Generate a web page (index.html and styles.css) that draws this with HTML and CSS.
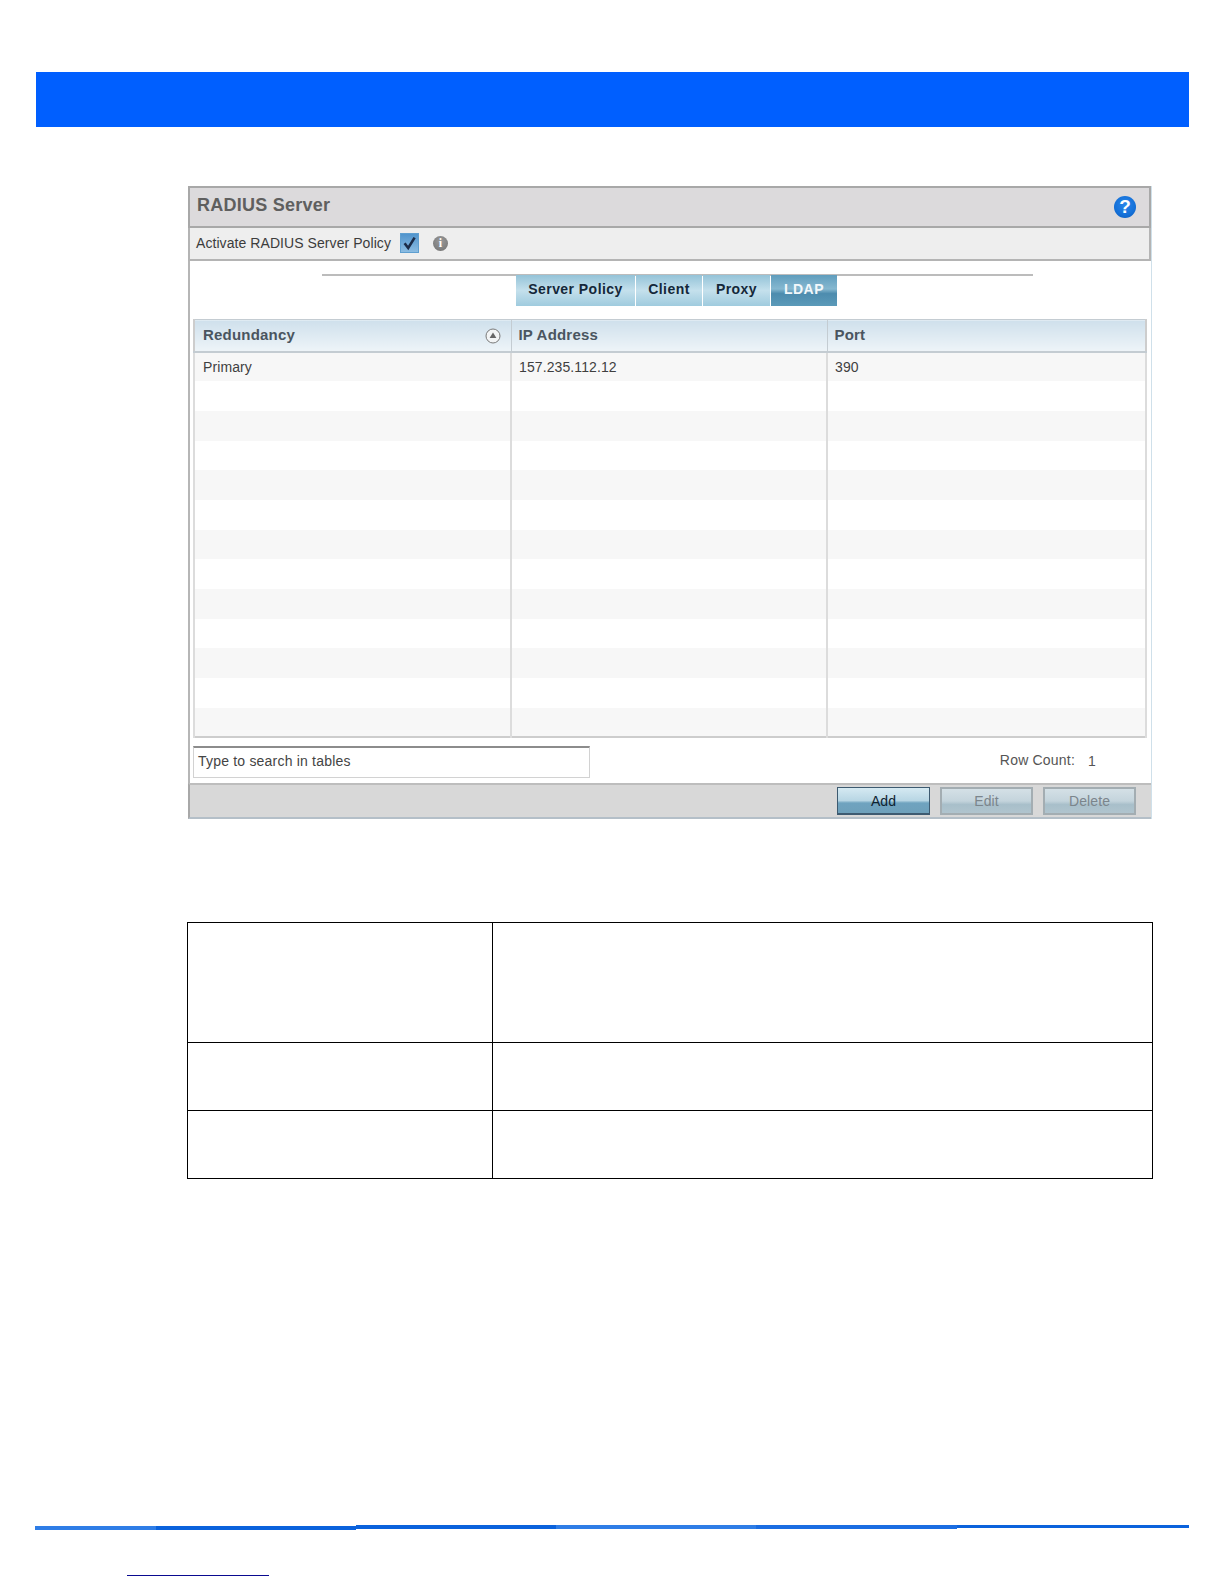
FILE: index.html
```html
<!DOCTYPE html>
<html lang="en">
<head>
<meta charset="utf-8">
<title>RADIUS Server</title>
<link rel="stylesheet" href="styles.css">
</head>
<body>
<div class="banner"></div>
<section class="panel">
  <header class="title-bar">
    <h1 class="title">RADIUS Server</h1>
    <span class="help">?</span>
  </header>
  <div class="option-bar">
    <span class="option-label">Activate RADIUS Server Policy</span>
    <svg class="check" width="19" height="20" viewBox="0 0 19 20"><defs><linearGradient id="chk" x1="0" y1="0" x2="0" y2="1"><stop offset="0" stop-color="#4f93cc"/><stop offset="1" stop-color="#8dbde2"/></linearGradient></defs><rect x="0.5" y="0.5" width="18" height="19" fill="url(#chk)" stroke="#5f9fd0"/><path d="M4.6 10.2 L8.2 15 L14.6 4.6" fill="none" stroke="#1c2c48" stroke-width="2.6"/></svg>
    <span class="info">i</span>
  </div>
  <div class="tab-area">
    <div class="tab-rule"></div>
    <nav class="tabs">
      <span class="tab tab-policy">Server Policy</span>
      <span class="tab tab-client">Client</span>
      <span class="tab tab-proxy">Proxy</span>
      <span class="tab tab-active">LDAP</span>
    </nav>
  </div>
  <table class="grid">
    <colgroup><col class="col-a"><col class="col-b"><col class="col-c"></colgroup>
    <thead>
      <tr>
        <th class="first"><span class="th-inner">Redundancy
          <svg class="sort" width="16" height="16" viewBox="0 0 16 16"><circle cx="8" cy="8" r="7" fill="#f2f4f5" stroke="#7a7a7a" stroke-width="1"/><path d="M8 4.6 L11.4 10 H4.6 Z" fill="#666"/></svg></span></th>
        <th>IP Address</th>
        <th>Port</th>
      </tr>
    </thead>
    <tbody>
      <tr><td class="first">Primary</td><td>157.235.112.12</td><td>390</td></tr>
      <tr><td></td><td></td><td></td></tr>
      <tr><td></td><td></td><td></td></tr>
      <tr><td></td><td></td><td></td></tr>
      <tr><td></td><td></td><td></td></tr>
      <tr><td></td><td></td><td></td></tr>
      <tr><td></td><td></td><td></td></tr>
      <tr><td></td><td></td><td></td></tr>
      <tr><td></td><td></td><td></td></tr>
      <tr><td></td><td></td><td></td></tr>
      <tr><td></td><td></td><td></td></tr>
      <tr><td></td><td></td><td></td></tr>
      <tr><td></td><td></td><td></td></tr>
    </tbody>
  </table>
  <div class="search-row">
    <div class="search">Type to search in tables</div>
    <div class="row-count"><span>Row Count:</span><span class="count">1</span></div>
  </div>
  <footer class="actions">
    <span class="btn btn-primary">Add</span>
    <span class="btn btn-off">Edit</span>
    <span class="btn btn-off">Delete</span>
  </footer>
</section>
<table class="doc">
  <colgroup><col class="doc-a"><col></colgroup>
  <tr class="doc-r1"><td></td><td></td></tr>
  <tr class="doc-r2"><td></td><td></td></tr>
  <tr class="doc-r3"><td></td><td></td></tr>
</table>
<div class="foot-line">
  <i class="seg seg-1"></i><i class="seg seg-2"></i><i class="seg seg-3"></i><i class="seg seg-4"></i><i class="seg seg-5"></i><i class="seg seg-6"></i>
</div>
<div class="foot-link"></div>
</body>
</html>
```
FILE: styles.css
```css
* { box-sizing: border-box; }
html, body { margin: 0; padding: 0; }
body {
  width: 1224px;
  height: 1584px;
  overflow: hidden;
  background: #fff;
  font-family: "Liberation Sans", Arial, sans-serif;
  color: #333;
}
.banner {
  height: 55px;
  margin: 72px 35px 0 36px;
  background: #005fff;
}
.panel {
  width: 964px;
  height: 633px;
  margin: 59px 0 0 188px;
  display: flex;
  flex-direction: column;
  background: #fff;
  border-right: 1px solid #cfe0ea;
  box-shadow: inset 2px 0 0 #b6b6b6;
}
.title-bar {
  height: 42px;
  flex: none;
  display: flex;
  align-items: center;
  justify-content: space-between;
  padding: 2px 13px 2px 7px;
  background: #dcdadc;
  border: 2px solid #a8a8a8;
}
.title {
  margin: 0 0 5px;
  font-size: 18px;
  line-height: 20px;
  font-weight: bold;
  letter-spacing: 0.25px;
  color: #5f5f5f;
}
.help {
  width: 22px;
  height: 22px;
  border-radius: 50%;
  background: radial-gradient(circle at 50% 40%, #2a86ea 0%, #1470d8 60%, #0a55b4 100%);
  color: #fff;
  font-size: 19px;
  line-height: 22px;
  font-weight: bold;
  text-align: center;
}
.option-bar {
  height: 33px;
  flex: none;
  display: flex;
  align-items: center;
  padding: 0 0 1px 6px;
  background: #eeeeee;
  border: 2px solid #b4b4b4;
  border-top: 0;
}
.option-label {
  flex: none;
  width: 204px;
  font-size: 14px;
  letter-spacing: 0.07px;
  color: #3c3c3c;
}
.check { flex: none; }
.info {
  width: 15px;
  height: 15px;
  margin-left: 14px;
  border-radius: 50%;
  background: radial-gradient(circle at 50% 35%, #9a9a9a 0%, #707070 100%);
  color: #fff;
  font-family: "Liberation Serif", serif;
  font-size: 12px;
  line-height: 15px;
  font-weight: bold;
  text-align: center;
}
.tab-area {
  height: 58px;
  flex: none;
  padding-top: 13px;
}
.tab-rule {
  height: 2px;
  width: 711px;
  margin-left: 134px;
  background: #bcbcbc;
}
.tabs {
  display: flex;
  margin: -1px 0 0 328px;
}
.tab {
  height: 31px;
  margin-right: 1px;
  font-size: 14px;
  line-height: 29px;
  font-weight: bold;
  letter-spacing: 0.45px;
  text-align: center;
  color: #14283a;
  background: linear-gradient(#94c3d8 0%, #c4e0ec 50%, #9fcbde 100%);
}
.tab-policy { width: 119px; }
.tab-client { width: 66px; }
.tab-proxy { width: 67px; }
.tab-active {
  width: 66px;
  margin-right: 0;
  color: #f2f8fb;
  background: linear-gradient(#5f9dbd 0%, #86b8d0 45%, #4d8cae 60%, #5b9ab9 100%);
}
.grid {
  width: 954px;
  height: 419px;
  margin-left: 5px;
  flex: none;
  border-collapse: collapse;
  table-layout: fixed;
  border: 2px solid #cdcdcd;
  border-top: 0;
}
.col-a { width: 317px; }
.col-b { width: 316px; }
.grid th {
  height: 32px;
  padding: 0 7px 2px;
  text-align: left;
  font-size: 15px;
  font-weight: bold;
  letter-spacing: 0.2px;
  color: #4a5560;
  background: linear-gradient(#cfe0ec, #eef4f8);
  border: 1px solid #c4ccd2;
  border-width: 1px 1px 2px 1px;
}
.grid .first { padding-left: 8px; }
.th-inner {
  display: flex;
  align-items: center;
  justify-content: space-between;
}
.sort { margin-right: 3px; margin-top: 4px; }
.grid td {
  height: 29.7px;
  padding: 0 7px;
  font-size: 14px;
  letter-spacing: 0.1px;
  color: #3f3f3f;
  border-left: 2px solid #dcdcdc;
  border-right: 2px solid #dcdcdc;
}
.grid tbody tr:nth-child(odd) { background: #f7f7f7; }
.search-row {
  flex: none;
  height: 45px;
  display: flex;
  justify-content: space-between;
  padding: 8px 0 4px 5px;
}
.search {
  width: 397px;
  height: 32px;
  padding-left: 4px;
  border: 1px solid #d2d2d2;
  border-top: 2px solid #8c8c8c;
  font-size: 14px;
  line-height: 26px;
  letter-spacing: 0.2px;
  color: #444;
}
.row-count {
  display: flex;
  padding: 6px 55px 0 0;
  font-size: 14px;
  letter-spacing: 0.2px;
  color: #555;
}
.count { margin: 1px 0 0 13px; }
.actions {
  flex: none;
  height: 36px;
  display: flex;
  justify-content: flex-end;
  align-items: flex-start;
  gap: 10px;
  padding: 2px 15px 0 0;
  background: #d8d8d8;
  border-top: 2px solid #bdbdbd;
  border-left: 2px solid #a8a8a8;
  border-bottom: 2px solid #b4bfc8;
}
.btn {
  width: 93px;
  height: 28px;
  font-size: 14px;
  line-height: 26px;
  letter-spacing: 0.1px;
  text-align: center;
}
.btn-primary {
  color: #0e2230;
  border: 1px solid #3d5a70;
  border-bottom-width: 2px;
  background: linear-gradient(#d5e9f2 0%, #b8d6e4 50%, #6fa3bf 60%, #6ea0ba 100%);
}
.btn-off {
  color: #7b858c;
  border: 2px solid #a3adb2;
  line-height: 24px;
  background: linear-gradient(#d4e0e6 0%, #c4d4dc 50%, #a8bfca 65%, #b0c4ce 100%);
}
.doc {
  width: 966px;
  margin: 103px 0 0 187px;
  border-collapse: collapse;
  table-layout: fixed;
}
.doc td { border: 1px solid #000; padding: 0; }
.doc-a { width: 305px; }
.doc-r1 { height: 120px; }
.doc-r2, .doc-r3 { height: 68px; }
.foot-line {
  display: flex;
  align-items: flex-start;
  height: 5px;
  margin: 346px 35px 0 35px;
}
.seg { display: block; height: 3.5px; background: #0a62dc; }
.seg-1 { width: 121px; margin-top: 1px; background: #2e7de6; }
.seg-2 { width: 200px; margin-top: 1px; }
.seg-3 { width: 200px; height: 4px; }
.seg-4 { width: 200px; background: #2e7de6; }
.seg-5 { width: 201px; background: #1a6de2; }
.seg-6 { width: 232px; height: 3px; }
.foot-link {
  width: 142px;
  height: 1px;
  margin: 45px 0 0 127px;
  background: #0a0a90;
}
```
